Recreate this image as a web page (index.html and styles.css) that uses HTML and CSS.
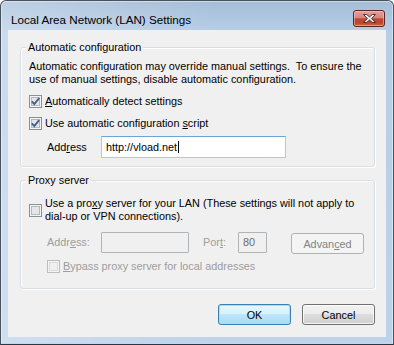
FILE: index.html
```html
<!DOCTYPE html>
<html>
<head>
<meta charset="utf-8">
<title>Local Area Network (LAN) Settings</title>
<link rel="stylesheet" href="styles.css">
</head>
<body>
<div class="window">
  <div class="titlebar">
    <span class="title">Local Area Network (LAN) Settings</span>
    <div class="close">
      <svg class="close-x" width="13" height="9" viewBox="0 0 13 9">
        <defs>
          <linearGradient id="xg" x1="0" y1="0" x2="0" y2="1">
            <stop offset="0" stop-color="#ffffff"/>
            <stop offset="1" stop-color="#d8d8d8"/>
          </linearGradient>
        </defs>
        <polygon points="0.5,0.5 3.6,0.5 6.5,2.9 9.4,0.5 12.5,0.5 8.6,4.5 12.5,8.5 9.4,8.5 6.5,6.1 3.6,8.5 0.5,8.5 4.4,4.5" fill="url(#xg)" stroke="#4b3434" stroke-width="1" stroke-linejoin="round"/>
      </svg>
    </div>
  </div>
  <div class="client">
    <fieldset class="group group-auto">
      <legend>Automatic configuration</legend>
      <p class="desc">Automatic configuration may override manual settings.&nbsp; To ensure the<br>use of manual settings, disable automatic configuration.</p>
      <div class="check-row">
        <svg class="cb" width="13" height="13" viewBox="0 0 13 13">
          <rect x="0.5" y="0.5" width="12" height="12" fill="#f4f4f4" stroke="#8e8f8f"/>
          <rect x="2.5" y="2.5" width="8" height="8" fill="#e4e6e9" stroke="#b3b8be"/>
          <path d="M2.8 6.4 L5.3 9 L10.2 3.1" fill="none" stroke="#4a5f8a" stroke-width="1.9"/>
        </svg>
        <span class="lbl"><u>A</u>utomatically detect settings</span>
      </div>
      <div class="check-row">
        <svg class="cb" width="13" height="13" viewBox="0 0 13 13">
          <rect x="0.5" y="0.5" width="12" height="12" fill="#f4f4f4" stroke="#8e8f8f"/>
          <rect x="2.5" y="2.5" width="8" height="8" fill="#e4e6e9" stroke="#b3b8be"/>
          <path d="M2.8 6.4 L5.3 9 L10.2 3.1" fill="none" stroke="#4a5f8a" stroke-width="1.9"/>
        </svg>
        <span class="lbl">Use automatic configuration <u>s</u>cript</span>
      </div>
      <div class="field-row">
        <span class="field-label">Add<u>r</u>ess</span>
        <div class="textbox focused url">http://vload.net<span class="caret"></span></div>
      </div>
    </fieldset>

    <fieldset class="group group-proxy">
      <legend>Proxy server</legend>
      <div class="check-row multi">
        <svg class="cb" width="13" height="13" viewBox="0 0 13 13">
          <rect x="0.5" y="0.5" width="12" height="12" fill="#f4f4f4" stroke="#8e8f8f"/>
          <rect x="2.5" y="2.5" width="8" height="8" fill="#e4e6e9" stroke="#b3b8be"/>
        </svg>
        <span class="lbl">Use a pro<u>x</u>y server for your LAN (These settings will not apply to<br>dial-up or VPN connections).</span>
      </div>
      <div class="field-row proxy-fields">
        <span class="field-label disabled">Addr<u>e</u>ss:</span>
        <div class="textbox disabled proxy-addr"></div>
        <span class="port-label disabled">Por<u>t</u>:</span>
        <div class="textbox disabled port">80</div>
        <div class="btn-disabled">Advan<u>c</u>ed</div>
      </div>
      <div class="check-row bypass">
        <svg class="cb" width="13" height="13" viewBox="0 0 13 13">
          <rect x="0.5" y="0.5" width="12" height="12" fill="#f4f4f4" stroke="#bcbcbc"/>
          <rect x="2.5" y="2.5" width="8" height="8" fill="#f0f0f0" stroke="#dadada"/>
        </svg>
        <span class="lbl disabled"><u>B</u>ypass proxy server for local addresses</span>
      </div>
    </fieldset>

    <div class="buttons">
      <div class="btn default">OK</div>
      <div class="btn">Cancel</div>
    </div>
  </div>
</div>
</body>
</html>
```

FILE: styles.css
```css
* { box-sizing: border-box; }
html, body { margin: 0; padding: 0; }
body {
  width: 394px;
  height: 345px;
  overflow: hidden;
  background: #ffffff;
  font-family: "Liberation Sans", Arial, sans-serif;
  font-size: 10.85px;
  color: #000000;
}

.window {
  width: 394px;
  height: 345px;
  border: 1px solid #46525e;
  border-bottom-color: #2c3640;
  border-radius: 6px 6px 0 0;
  padding: 0 7px 7px 7px;
  display: flex;
  flex-direction: column;
  background:
    linear-gradient(90deg, rgba(255,255,255,0.28) 0, rgba(255,255,255,0) 55%),
    linear-gradient(180deg, #a5bdd8 0, #b6cde6 29px, #bcd3eb 100%);
  box-shadow: inset 0 0 0 1px rgba(255,255,255,0.45), inset 0 -1px 0 #7cc4d4;
}

.titlebar {
  height: 29px;
  flex: none;
  display: flex;
  align-items: flex-start;
  justify-content: space-between;
}
.title {
  margin: 11px 0 0 3px;
  font-size: 11.67px;
  line-height: 16px;
  color: #000000;
}
.close {
  margin: 9px 1px 0 0;
  width: 32px;
  height: 17px;
  border: 1px solid #5c2622;
  border-radius: 3px;
  display: flex;
  align-items: center;
  justify-content: center;
  background: linear-gradient(180deg, #e2a195 0, #d5887c 45%, #c04633 52%, #c0432d 78%, #d2663f 100%);
  box-shadow: inset 0 0 0 1px rgba(255,220,210,0.45);
}
.close-x { display: block; }

.client {
  height: 307px;
  flex: none;
  background: #f0f0f0;
  padding: 10px 11px 0 12px;
  display: flex;
  flex-direction: column;
}

.group {
  margin: 0;
  min-width: 0;
  border: 1px solid #d5dfe5;
  border-radius: 3px;
  padding: 0 8px 8px 8px;
  box-shadow: inset 1px 1px 0 #ffffff, 1px 1px 0 #ffffff;
}
.group legend {
  margin-left: -3px;
  padding: 0 2px;
  line-height: 14px;
  background: #f0f0f0;
}
.group-proxy {
  margin-top: 6px;
  padding-bottom: 15px;
}

.desc {
  margin: 6px 0 0 0;
  line-height: 13px;
}

.check-row {
  display: flex;
  align-items: center;
  gap: 3px;
  margin-top: 9px;
  line-height: 13px;
}
.cb { display: block; flex: none; }
.check-row.multi { margin-top: 10px; }
.check-row.bypass { margin-left: 18px; margin-top: 6px; }

.field-row {
  display: flex;
  align-items: center;
  margin-top: 6px;
}
.field-label {
  margin-left: 18px;
  width: 54px;
  flex: none;
}
.textbox {
  height: 22px;
  border: 1px solid #abadb3;
  padding: 0 4px;
  display: flex;
  align-items: center;
  background: #ffffff;
  line-height: 13px;
}
.textbox.focused {
  border-color: #a9cbea;
  border-top-color: #6fa3d3;
}
.url { width: 185px; }
.caret {
  display: inline-block;
  width: 1px;
  height: 12px;
  background: #000000;
  margin-left: 1px;
}

.proxy-fields {
  margin-top: 9px;
  align-items: flex-start;
  height: 22px;
}
.proxy-fields .field-label { line-height: 21px; }
.textbox.disabled {
  height: 21px;
  background: #f0f0f0;
  border-color: #b1b4b7;
  border-radius: 1px;
  color: #6d6d6d;
}
.proxy-addr { width: 88px; }
.port-label {
  margin-left: 14px;
  width: 35px;
  flex: none;
  line-height: 21px;
}
.port { width: 29px; }
.disabled { color: #9d9d9d; }
.btn-disabled {
  margin: 1px 0 0 24px;
  width: 73px;
  height: 21px;
  border: 1px solid #adb2b5;
  border-radius: 3px;
  background: #f4f4f4;
  color: #838383;
  display: flex;
  align-items: center;
  justify-content: center;
}

.buttons {
  display: flex;
  justify-content: flex-end;
  gap: 11px;
  margin-top: 15px;
}
.btn {
  width: 73px;
  height: 21px;
  border: 1px solid #707070;
  border-radius: 3px;
  display: flex;
  align-items: center;
  justify-content: center;
  background: linear-gradient(180deg, #f2f2f2 0, #ebebeb 50%, #dddddd 50%, #cfcfcf 100%);
  box-shadow: inset 0 0 0 1px rgba(255,255,255,0.75);
}
.btn.default {
  border-color: #3c7fb1;
  background: linear-gradient(180deg, #eaf6fd 0, #d9f0fc 50%, #bee6fd 50%, #a7d9f5 100%);
  box-shadow: inset 0 0 0 1px #9fe0fb;
}
```
